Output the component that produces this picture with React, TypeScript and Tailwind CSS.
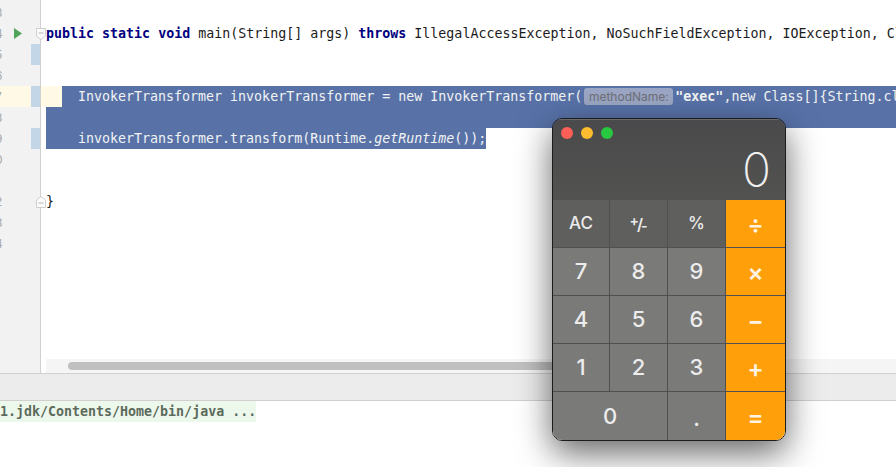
// App.tsx
function FoldMark({ up }: { up?: boolean }) {
  return (
    <svg
      className="absolute left-[36px] top-[5px] z-10"
      width="10"
      height="12"
      viewBox="0 0 10 12"
    >
      <path
        d={up ? 'M.5 11.5V4L5 .5 9.500 4v7.500z' : 'M.5 .5h9V8L5 11.500.5 8z'}
        fill="#fbfbfb"
        stroke="#cfcfcf"
      />
      <path d={up ? 'M2.500 7h5' : 'M2.500 5h5'} stroke="#b5b5b5" />
    </svg>
  )
}

const gutterRows = ['3', '4', '5', '6', '7', '8', '9', '0', '1', '2', '3', '4']

function Gutter() {
  return (
    <div className="w-[41px] shrink-0 border-r border-[#d0d0d0] bg-[#f2f2f2] pt-[2px]">
      {gutterRows.map((n, i) => (
        <div
          key={i}
          className={`relative h-[21px] flex items-center ${i === 4 ? 'bg-[#fff9e5]' : ''}`}
        >
          <span className="-ml-[5px] text-[12px] text-[#a8a8a8]">{n}</span>
          {(i === 2 || i === 4 || i === 6) && (
            <span className="absolute right-0 top-0 h-[21px] w-[9px] bg-[#c3d6e8]" />
          )}
          {i === 1 && (
            <svg className="absolute left-[14px] top-[5px]" width="8" height="11" viewBox="0 0 8 11">
              <path d="M0 0l8 5.500L0 11z" fill="#4fa35a" />
            </svg>
          )}
          {i === 1 && <FoldMark />}
          {i === 9 && <FoldMark up />}
        </div>
      ))}
    </div>
  )
}

function Kw({ children }: { children: React.ReactNode }) {
  return <span className="font-bold text-[#000080]">{children}</span>
}

function Code() {
  return (
    <div className="relative flex-1 min-w-0 overflow-hidden pt-[23px] font-['DejaVu_Sans_Mono',monospace] text-[13.3px] leading-[21px] whitespace-pre text-[#1a1a1a]">
      <div className="h-[21px] pl-[5px]">
        <Kw>public</Kw> <Kw>static</Kw> <Kw>void</Kw> main(String[] args) <Kw>throws</Kw>{' '}
        IllegalAccessException, NoSuchFieldException, IOException, ClassNotFoundException
      </div>
      <div className="h-[21px]" />
      <div className="h-[21px]" />
      <div className="flex h-[21px] pl-[21px] bg-[#fff9e5]">
        <div className="flex flex-1 items-center bg-[#5872a8] pl-[16px] font-medium text-[#f2f2f2]">
          <span>InvokerTransformer invokerTransformer = new InvokerTransformer(</span>
          <span className="ml-[2px] flex h-[17px] w-[89px] shrink-0 items-center justify-center rounded-[3px] bg-[#9aa6c3] font-['Inter',sans-serif] text-[12px] font-normal text-[#6e6e78]">
            methodName:
          </span>
          <span className="ml-[2px] font-bold">"exec"</span>
          <span>,new Class[]{'{'}String.class{'}'}</span>
        </div>
      </div>
      <div className="ml-[5px] h-[21px] bg-[#5872a8]" />
      <div className="ml-[5px] h-[21px] w-[440px] bg-[#5872a8] pl-[32px] font-medium text-[#f2f2f2]">
        invokerTransformer.transform(Runtime.<span className="italic">getRuntime</span>());
      </div>
      <div className="h-[21px]" />
      <div className="h-[21px]" />
      <div className="h-[21px] pl-[5px]">{'}'}</div>

      <div className="absolute bottom-0 left-[5px] right-0 h-[14px] bg-[#f5f5f5] pl-[22px] pt-[3px]">
        <div className="h-[8px] w-[520px] rounded-full bg-[#c0c0c0]" />
      </div>
    </div>
  )
}

const keys = [
  { label: 'AC', kind: 'fn' },
  { label: 'sign', kind: 'fn' },
  { label: '%', kind: 'fn' },
  { label: '÷', kind: 'op' },
  { label: '7', kind: 'num' },
  { label: '8', kind: 'num' },
  { label: '9', kind: 'num' },
  { label: '×', kind: 'op' },
  { label: '4', kind: 'num' },
  { label: '5', kind: 'num' },
  { label: '6', kind: 'num' },
  { label: '−', kind: 'op' },
  { label: '1', kind: 'num' },
  { label: '2', kind: 'num' },
  { label: '3', kind: 'num' },
  { label: '+', kind: 'op' },
  { label: '0', kind: 'zero' },
  { label: '.', kind: 'num' },
  { label: '=', kind: 'op' },
]

function Key({ label, kind, last }: { label: string; kind: string; last: boolean }) {
  const bg =
    kind === 'fn' ? 'bg-[#5f5f5d]' : kind === 'op' ? 'bg-[#ff9f0a]' : 'bg-[#7a7a78]'
  return (
    <div
      className={`flex items-center justify-center border-[#505050] ${bg} ${
        kind === 'zero' ? 'col-span-2' : ''
      } ${kind === 'op' ? '' : 'border-r'} ${last ? '' : 'border-b'} ${
        kind === 'op' ? 'text-[24px] pt-[3px] font-semibold text-[#fdf3e3]' : 'text-[#ececec]'
      } ${kind === 'fn' ? 'text-[17px] font-medium' : ''} ${
        kind === 'num' || kind === 'zero' ? 'text-[22px] font-medium' : ''
      }`}
    >
      {label === 'sign' ? (
        <span className="flex items-center text-[16px] font-semibold leading-none">
          <span className="-mt-[5px] text-[14px]">+</span>
          <span className="-mx-[2px]">/</span>
          <span className="mt-[5px] text-[14px]">-</span>
        </span>
      ) : label === '.' ? (
        <span className="pt-[5px]">.</span>
      ) : (
        label
      )}
    </div>
  )
}

function Calculator() {
  return (
    <div className="absolute left-[552px] top-[118px] z-20 w-[234px] overflow-hidden rounded-[10px] border border-[#1c1c1c] font-['Inter',sans-serif] shadow-[0_12px_34px_rgba(0,0,0,0.6)]">
      <div className="relative h-[81px] border-t border-[#6a6a6a] bg-gradient-to-b from-[#4a4a4c] to-[#525250]">
        <div className="flex gap-[8px] pl-[8px] pt-[7px]">
          <span className="h-[12px] w-[12px] rounded-full bg-[#ff5f57]" />
          <span className="h-[12px] w-[12px] rounded-full bg-[#febc2e]" />
          <span className="h-[12px] w-[12px] rounded-full bg-[#28c840]" />
        </div>
        <div className="absolute right-[14px] top-[22px] text-[48px] leading-[56px] font-extralight text-[#f0f0f0]">
          0
        </div>
      </div>
      <div className="grid grid-cols-[57px_58px_58px_59px] grid-rows-[repeat(5,48px)]">
        {keys.map((k, i) => (
          <Key key={i} label={k.label} kind={k.kind} last={i >= 16} />
        ))}
      </div>
    </div>
  )
}

export default function App() {
  return (
    <div className="relative flex h-[467px] w-[896px] flex-col overflow-hidden bg-white font-['Inter',sans-serif]">
      <div className="flex h-[373px] shrink-0">
        <Gutter />
        <Code />
      </div>
      <div className="h-[28px] shrink-0 border-y border-[#d0d0d0] bg-[#ececec]" />
      <div className="flex-1 font-['DejaVu_Sans_Mono',monospace] text-[13.3px] leading-[21px]">
        <div className="h-[21px] w-[256px] whitespace-pre bg-[#edf8ec] font-bold text-[#5c6b5c]">
          1.jdk/Contents/Home/bin/java ...
        </div>
      </div>
      <Calculator />
    </div>
  )
}
